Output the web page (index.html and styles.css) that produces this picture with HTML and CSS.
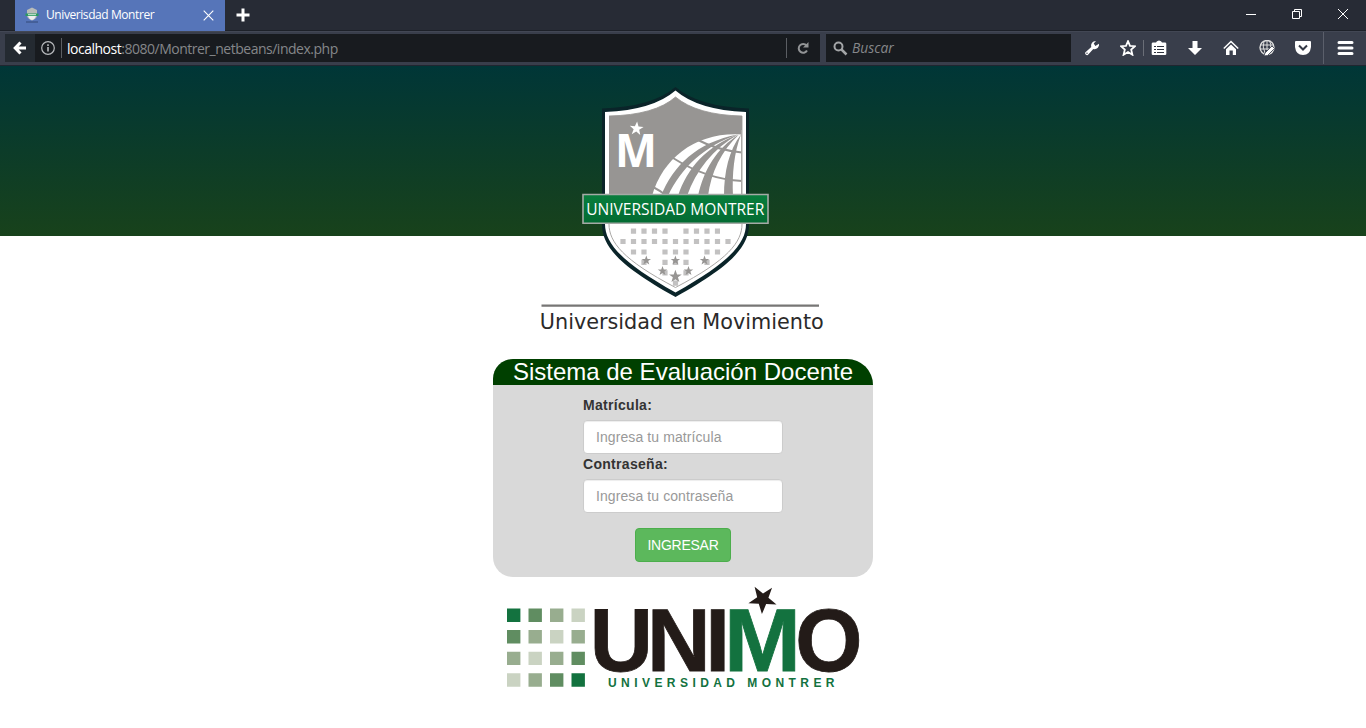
FILE: index.html
```html
<!DOCTYPE html>
<html lang="es">
<head>
<meta charset="utf-8">
<title>Univerisdad Montrer</title>
<link rel="stylesheet" href="styles.css">
</head>
<body>
<div class="titlebar">
  <div class="tab">
    <svg class="favicon" width="16" height="16" viewBox="0 0 16 16"><path d="M3 3L8 .5 13 3V9Q12 12 8 13.500 4 12 3 9Z" fill="#b9bcb9"/><path d="M4 9h8q-1 3-4 4-3-1-4-4Z" fill="#eee"/><path d="M1.500 6.500h13v2.500h-13Z" fill="#2b9a60"/><path d="M4 7.700h8" stroke="#d5eadb"/><path d="M2 15h12" stroke="#334b79"/></svg>
    <span class="tab-title">Univerisdad Montrer</span>
    <svg class="tab-close" width="11" height="11" viewBox="0 0 11 11"><path d="M.7.7l9.600 9.600M10.300.7L.7 10.300" stroke="#fff" stroke-width="1.100"/></svg>
  </div>
  <svg class="newtab" width="14" height="14" viewBox="0 0 14 14"><path d="M7 .5v13M.5 7h13" stroke="#fff" stroke-width="3"/></svg>
  <div class="window-buttons">
    <svg width="12" height="12" viewBox="0 0 12 12"><path d="M1 6.500h10" stroke="#fff"/></svg>
    <svg width="12" height="12" viewBox="0 0 12 12"><path d="M1.500 3.500h7v7h-7ZM3.500 3.500v-2h7v7h-2" fill="none" stroke="#fff"/></svg>
    <svg width="12" height="12" viewBox="0 0 12 12"><path d="M1 1l10 10M11 1L1 11" stroke="#fff"/></svg>
  </div>
</div>
<div class="toolbar">
  <div class="back"><svg width="14" height="14" viewBox="0 0 14 14"><path d="M7.500 1.500L2.200 7l5.300 5.500M2.500 7H13" fill="none" stroke="#fff" stroke-width="3"/></svg></div>
  <div class="address">
    <svg class="info" width="14" height="14" viewBox="0 0 14 14"><circle cx="7" cy="7" r="6.300" fill="none" stroke="#b8babd" stroke-width="1.200"/><path d="M7 6v4.500M7 3.300v1.700" stroke="#b8babd" stroke-width="1.600"/></svg>
    <span class="divider"></span>
    <span class="url"><b>localhost</b>:8080/Montrer_netbeans/index.php</span>
    <span class="divider"></span>
    <svg class="reload" width="12" height="12" viewBox="0 0 12 12"><path d="M9.500 3.500A4.400 4.400 0 1 0 10 8.500" fill="none" stroke="#929496" stroke-width="2"/><path d="M11.500 0v5.500H6Z" fill="#929496"/></svg>
  </div>
  <div class="search">
    <svg width="15" height="15" viewBox="0 0 15 15"><circle cx="5.500" cy="5.500" r="4" fill="none" stroke="#a3a5a7" stroke-width="2"/><path d="M8.500 8.500l5 5" stroke="#a3a5a7" stroke-width="2.500"/></svg>
    <span>Buscar</span>
  </div>
  <div class="tools">
    <svg class="tool" viewBox="0 0 16 16"><path d="M1.200 12.400L7.300 7C6.500 4 8.500 1 12 1L9.700 3.600 11.400 6 15 3.800C15.500 7.500 12 10 9.300 9L3.800 15Q2.200 15.500 1.200 14Z" fill="#fff"/><circle cx="3" cy="13.200" r=".7" fill="#343946"/></svg>
    <svg class="tool star" viewBox="0 0 16 16"><path d="M8 1.200L10 5.800 15 6.200 11.200 9.600 12.400 14.700 8 12 3.600 14.700 4.800 9.600 1 6.200 6 5.800Z" fill="none" stroke="#fff" stroke-width="1.800"/></svg>
    <span class="tool-divider"></span>
    <svg class="tool list" viewBox="0 0 16 16"><path d="M1.500 2.500h3.500Q5.500 1 8 .5 10.500 1 11 2.500h3.500l.8 1v10.700l-.8.800h-13l-.8-.8V3.500Z" fill="#fff"/><path d="M3 6.500h2M6 6.500h7M3 9.500h2M6 9.500h7M3 12.500h2M6 12.500h7" stroke="#30343f" stroke-width="1.200"/></svg>
    <svg class="tool" viewBox="0 0 16 16"><path d="M5.500 1h5v7H15L8 15 1 8h4.500Z" fill="#fff"/></svg>
    <svg class="tool" viewBox="0 0 16 16"><path d="M.8 8.500L8 1.500l7.200 7" fill="none" stroke="#fff" stroke-width="1.500"/><path d="M3 9.300l5-4.800 5 4.800V15H9.800v-4.500H6.500V15H3Z" fill="#fff"/></svg>
    <svg class="tool" viewBox="0 0 16 16"><circle cx="8" cy="7.500" r="7" fill="none" stroke="#ddd" stroke-width="1.400"/><path d="M1 5h14M1 9h11M5 1q-2 6 1 12M10.500 1q2 3 1 7M8 0v10" fill="none" stroke="#ddd"/><path d="M5 16l1-3 7-7 2.500 2.500-7 7Z" fill="#fff" stroke="#3a3f4c" stroke-width=".8"/></svg>
    <svg class="tool" viewBox="0 0 16 16"><path d="M0 2q0-1 1-1h14q1 0 1 1v5q-1 8-8 8T0 7Z" fill="#fff"/><path d="M4 5.500l4 4 4-4" fill="none" stroke="#343946" stroke-width="2"/></svg>
    <span class="menu-divider"></span>
    <svg class="tool menu" viewBox="0 0 17 16"><path d="M2 2.500h13M2 8h13M2 13.500h13" stroke="#fff" stroke-width="3" stroke-linecap="round"/></svg>
  </div>
</div>
<header class="banner">
  <svg class="crest" width="290" height="250" viewBox="538 86 290 250">
    <defs>
      <path id="star" d="M0-1L.25-.31.95-.31.38.12.59.81 0 .4-.59.81-.38.12-.95-.31-.25-.31Z"/>
      <clipPath id="field"><path d="M609 116Q655 115 675.500 97 697 115 742 116V196H609Z"/></clipPath>
      <linearGradient id="ribbon" x2="0" y2="1"><stop stop-color="#087e3d"/><stop offset="1" stop-color="#036b32"/></linearGradient>
    </defs>
    <path d="M602 108.500Q652 107 675.500 87 699 107 749 108.500V224C749 246 733 265 675.500 297 618 265 602 246 602 224Z" fill="#0a2429"/>
    <path d="M605 112Q653 110 675.500 90.500 698 110 746 112V224C746 243 730 262 675.500 292.500 621 262 605 243 605 224Z" fill="#fff"/>
    <path d="M609 116Q655 115 675.500 97 697 115 742 116V224C742 242 728 260 675.500 287.500 623 260 609 242 609 224" fill="none" stroke="#aaa8a6"/>
    <g clip-path="url(#field)">
      <path d="M609 90h133v110H609Z" fill="#979593"/>
      <path d="M652 196C663 157 697 132 741 134.500V196Z" fill="#fff"/>
      <g fill="#979593">
        <path d="M661 196C673 166 697 142 738 134.500 704 146 681 168 668 196Z"/>
        <path d="M678 196C687 168 707 146 738 134.500 713 149 696 170 687 196Z"/>
        <path d="M698 196C704 169 717 148 739 134.500 721 151 711 173 708 196Z"/>
        <path d="M724 196C724 172 729 150 741 134.500 734 153 732 174 733 196Z"/>
      </g>
      <path d="M698 140C711 147 726 151 743 152.500M673 158C692 170 716 180 743 181M653 187Q661 191 668 197" stroke="#979593" stroke-width="2" fill="none"/>
      <path d="M741.500 130v66" stroke="#aaa8a6"/>
    </g>
    <text class="crest-m" x="615" y="167" textLength="42" lengthAdjust="spacingAndGlyphs">M</text>
    <use href="#star" transform="translate(636.500 128.700) rotate(5) scale(7.300)" fill="#fff"/>
    <g fill="none" stroke="#c2c1c1" stroke-width="5.200">
      <path d="M630.900 231.200H670" stroke-dasharray="5.200 5.300"/>
      <path d="M683.400 231.200H720" stroke-dasharray="5.200 5.300"/>
      <path d="M620.400 241.500H731" stroke-dasharray="5.200 5.300"/>
      <path d="M630.900 252H647M662.400 252H689M704.400 252H721" stroke-dasharray="5.200 5.300"/>
      <path d="M641.400 262.400h5.200M662.400 262.400H689M704.400 262.400h5.200M662.400 272.800h5.200M683.400 272.800h5.200M672.900 283.200h5.200" stroke-dasharray="5.200 5.300"/>
    </g>
    <g fill="#979593">
      <use href="#star" transform="translate(646.300 260.500) scale(5)"/>
      <use href="#star" transform="translate(675.400 260.500) scale(5)"/>
      <use href="#star" transform="translate(704.500 260.500) scale(5)"/>
      <use href="#star" transform="translate(662.500 271) scale(5)"/>
      <use href="#star" transform="translate(688.500 271) scale(5)"/>
      <use href="#star" transform="translate(675.400 276.500) scale(6.700)"/>
    </g>
    <path d="M583 194.500h185v28.800H583Z" fill="url(#ribbon)" stroke="#a5aaa6" stroke-width="1.600"/>
    <text class="crest-name" x="586.300" y="215" textLength="178" lengthAdjust="spacingAndGlyphs">UNIVERSIDAD MONTRER</text>
    <path d="M541.500 305.700h277.500" stroke="#777675" stroke-width="2.200"/>
    <text class="crest-motto" x="539.800" y="328.800" textLength="284" lengthAdjust="spacingAndGlyphs">Universidad en Movimiento</text>
  </svg>
</header>
<main class="content">
  <form class="panel">
    <h1 class="panel-title">Sistema de Evaluación Docente</h1>
    <div class="fields">
      <label for="user">Matrícula:</label>
      <input id="user" type="text" placeholder="Ingresa tu matrícula">
      <label for="pass">Contraseña:</label>
      <input id="pass" type="password" placeholder="Ingresa tu contraseña">
      <button type="button">INGRESAR</button>
    </div>
  </form>
  <svg class="unimo" width="380" height="115" viewBox="493 585 380 115">
    <g stroke-width="13.400" fill="none">
      <g stroke="#13723f"><path d="M507 615.200h13.400M571.500 680h13.400"/></g>
      <g stroke="#608d61"><path d="M528.500 615.200h13.400M507 636.800h13.400M571.500 658.400h13.400M550 680h13.400"/></g>
      <g stroke="#98ad8f"><path d="M550 615.200h13.400M528.500 636.800h13.400M571.500 636.800h13.400M507 658.400h13.400M550 658.400h13.400M528.500 680h13.400"/></g>
      <g stroke="#cad3c2"><path d="M571.500 615.200h13.400M550 636.800h13.400M528.500 658.400h13.400M507 680h13.400"/></g>
    </g>
    <text class="unimo-word" y="671"><tspan x="589.700" textLength="63.200" lengthAdjust="spacingAndGlyphs">U</tspan><tspan x="647" textLength="63.600" lengthAdjust="spacingAndGlyphs">N</tspan><tspan x="705.200">I</tspan><tspan class="unimo-m" x="724" textLength="77" lengthAdjust="spacingAndGlyphs">M</tspan><tspan x="795.200" textLength="67.200" lengthAdjust="spacingAndGlyphs">O</tspan></text>
    <use href="#star" transform="translate(762.500 600) rotate(183) scale(14.800)" fill="#fff" stroke="#fff" stroke-width=".1"/>
    <use href="#star" transform="translate(762.700 599.300) rotate(183) scale(14.800)" fill="#231b18"/>
    <text class="unimo-sub" x="608" y="686.800" textLength="226.500">UNIVERSIDAD MONTRER</text>
  </svg>
</main>
</body>
</html>
```

FILE: styles.css
```css
* { box-sizing: border-box; }
body { margin: 0; height: 728px; overflow: hidden; background: #fff; font: 14px/20px "Liberation Sans", Arial, sans-serif; color: #333; }
svg { display: block; flex-shrink: 0; }

.titlebar { display: flex; align-items: center; height: 31px; padding-left: 15px; background: #272b35; border-bottom: 1px solid #1d2129; }
.tab { display: flex; align-items: center; width: 210px; height: 31px; padding: 0 11px 0 9px; background: #5675b9; color: #fff; font: 12px/16px "Open Sans", "Noto Sans", sans-serif; }
.tab-title { margin-left: 6px; letter-spacing: -0.42px; white-space: nowrap; }
.tab-close { margin-left: auto; }
.newtab { margin-left: 11px; }
.window-buttons { display: flex; gap: 34px; margin: -2px 17px 0 auto; }

.toolbar { display: flex; align-items: center; height: 35px; padding: 0 0 1px 5px; background: #393e4b; border-bottom: 1px solid #202630; border-top: 1px solid #424754; }
.back { display: flex; align-items: center; justify-content: center; width: 30px; height: 28px; background: #242a31; }
.address { display: flex; align-items: center; width: 785px; height: 28px; padding: 0 11px 0 6px; background: #181b1f; }
.divider { width: 1px; height: 20px; margin-left: 6px; background: #5b5e63; }
.url { flex: 1; margin: 1px 0 0 5px; color: #85878a; font: 14px/20px "Open Sans", "Noto Sans", sans-serif; letter-spacing: -0.49px; white-space: nowrap; }
.url b { font-weight: 400; color: #fff; }
.reload { margin-left: 10px; }
.search { display: flex; align-items: center; gap: 4px; width: 245px; height: 28px; margin-left: 6px; padding-left: 7px; background: #181b1f; color: #85878a; font: italic 13.800px/20px "Open Sans", "Noto Sans", sans-serif; }
.tools { display: flex; align-items: center; margin-left: 13px; }
.tool { width: 16px; height: 16px; margin-right: 20px; }
.star { margin-right: 7px; }
.tool-divider { width: 1px; height: 16px; margin-right: 7px; background: #6a6e77; }
.menu-divider { width: 1px; height: 32px; margin: 0 13px 0 -8px; background: #5b5f6b; }
.menu { width: 17px; margin: 0; }

.banner { height: 170px; padding-top: 20px; background: linear-gradient(#003637, #18421b); }
.crest { position: relative; margin-left: 538px; overflow: visible; }
.crest-m { font: bold 47px "Open Sans", "Noto Sans", sans-serif; fill: #fff; }
.crest-name { font: 16.500px "Open Sans", "Noto Sans", sans-serif; fill: #fff; }
.crest-motto { font: 20.500px "DejaVu Sans", Verdana, sans-serif; fill: #2b2a29; }

.content { display: flex; flex-direction: column; align-items: center; padding-top: 123px; }
.panel { width: 380px; height: 218px; background: #d9d9d9; border-radius: 20px 26px 20px 20px; }
.panel-title { height: 26px; margin: 0; background: #004000; border-radius: 20px 26px 0 0; color: #fff; font-size: 24px; font-weight: 400; line-height: 26px; text-align: center; white-space: nowrap; }
.fields { display: flex; flex-direction: column; width: 200px; margin: 10px auto 0; }
.fields label { height: 20px; margin-bottom: 5px; font-weight: 700; letter-spacing: .3px; }
.fields input { height: 34px; padding: 6px 12px; border: 1px solid #ccc; border-radius: 4px; background: #fff; box-shadow: inset 0 1px 1px rgba(0, 0, 0, .075); font: inherit; letter-spacing: .09px; }
.fields input::placeholder { color: #999; opacity: 1; }
.fields button { align-self: center; width: 96px; height: 34px; margin-top: 15px; padding: 0; border: 1px solid #4cae4c; border-radius: 4px; background: #5cb85c; color: #fff; font: inherit; letter-spacing: -.25px; }
.unimo { margin-top: 8px; overflow: visible; }
.unimo-word { font: bold 89.500px "Liberation Sans", Arial, sans-serif; fill: #231b18; stroke: #231b18; stroke-width: .8px; }
.unimo-m { fill: #13723f; stroke: #13723f; }
.unimo-sub { font: bold 12px "Liberation Sans", Arial, sans-serif; fill: #13723f; }
```
